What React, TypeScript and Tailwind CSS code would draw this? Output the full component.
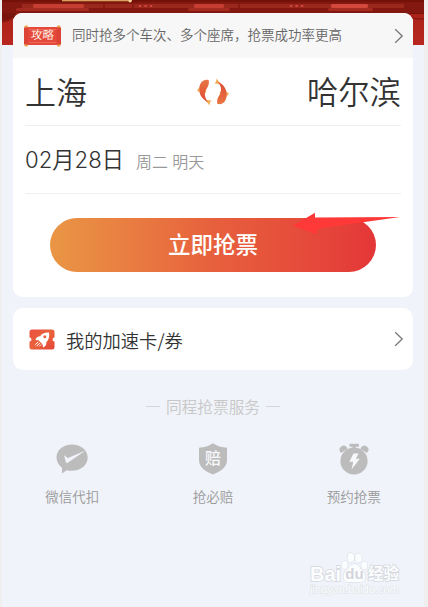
import React from 'react';

const FONT = "font-['Liberation_Sans','Noto_Sans_CJK_SC',sans-serif]";

const Banner: React.FC = () => (
  <svg viewBox="0 0 422 45" className="absolute left-0 top-0 h-[45px] w-full">
    <defs>
      <linearGradient id="wall" x1="0" y1="0" x2="0" y2="1">
        <stop offset="0" stopColor="#a32016" />
        <stop offset="1" stopColor="#b9271f" />
      </linearGradient>
    </defs>
    <rect width="422" height="45" fill="url(#wall)" />
    <rect width="422" height="13" fill="#82180f" />
    <rect y="0" width="422" height="2" fill="#741109" />
    <rect x="20" y="4" width="382" height="4" fill="#9b281c" />
    <rect x="60" y="0" width="70" height="1.3" fill="#d9a15c" />
    <circle cx="128" cy="0.8" r="1.6" fill="#f2d39a" />
    <rect x="31" y="4" width="51" height="4" rx="1.5" fill="#c63d31" />
    <rect x="14" y="8" width="73" height="3" rx="1.5" fill="#a62a1f" />
    <rect x="186" y="8" width="42" height="3" rx="1.5" fill="#a62a1f" />
    <rect x="192" y="4" width="30" height="4" rx="1.5" fill="#c63d31" />
    <rect x="326" y="8" width="45" height="3" rx="1.5" fill="#a62a1f" />
    <rect x="329" y="4" width="37" height="4" rx="1.5" fill="#d2483a" />
    <path d="M102 4v5M131 4v5M237 4v5" stroke="#741109" />
    {[137, 142.5, 148, 288, 293.5, 299].map((x) => (
      <rect key={x} x={x} y="5" width="2.2" height="2" fill="#d2483a" />
    ))}
    <path d="M0 13h14v3Q8 20 0 21zM396 13h26v1h-21v6h-5z" fill="#7a150d" />
    <path d="M0 22Q8 21 12 17M401 15Q405 19 422 19" stroke="#7a150d" fill="none" />
  </svg>
);

const StrategyTag: React.FC = () => (
  <div className="relative flex h-[22px] w-[37px] items-center justify-center">
    <svg viewBox="0 0 37 22" className="absolute inset-0 h-full w-full">
      <rect x="2" y="2" width="33" height="18" fill="#e5493b" />
      <path d="M4 4.5h29M4 17.5h29" stroke="#f0705c" strokeWidth="0.8" />
      <rect x="0.5" y="0.5" width="3.5" height="21" rx="1.2" fill="#efa04c" />
      <rect x="33" y="0.5" width="3.5" height="21" rx="1.2" fill="#efa04c" />
      <rect x="0" y="2.5" width="4.5" height="17" fill="#dc4236" />
      <rect x="32.5" y="2.5" width="4.5" height="17" fill="#dc4236" />
    </svg>
    <span className="relative -skew-x-6 pt-px text-[11.5px] leading-none text-[#fff3e6]">攻略</span>
  </div>
);

const Chevron: React.FC = () => (
  <svg viewBox="0 0 10 16" className="h-4 w-[10px]" fill="none" stroke="#777" strokeWidth="1.3">
    <path d="M1.2 1.2 8.2 8l-7 6.8" />
  </svg>
);

const Fish: React.FC = () => (
  <g>
    <path d="M2.6 9 0 12.300l2.800 2.500zM8 11l1.500 2.300-2 3zM8 21.500l6.800 1.300-1.700 1.200-.7 3.500-1.800-2.500z" fill="#f1ae55" />
    <path d="M11.800 2.200C6.500.6 2.500 4.800 2.300 10.800c-.1 5.800 2.500 10.300 8.700 13.400C8 20 7 16.300 8.600 12.500 10.800 9 12.400 6.500 11.800 2.200z" fill="url(#fish)" />
  </g>
);

const SwapFish: React.FC = () => (
  <svg viewBox="0 0 32 28" className="h-7 w-8">
    <defs>
      <linearGradient id="fish" x1="0" y1="0" x2="0" y2="28" gradientUnits="userSpaceOnUse">
        <stop offset="0" stopColor="#e87b45" />
        <stop offset="1" stopColor="#df4030" />
      </linearGradient>
    </defs>
    <Fish />
    <g transform="rotate(180 16 14)">
      <Fish />
    </g>
  </svg>
);

const CouponIcon: React.FC = () => (
  <svg viewBox="0 0 26 21" className="h-[21px] w-[26px]">
    <defs>
      <linearGradient id="coupon" x1="0" y1="0" x2="1" y2="1">
        <stop offset="0" stopColor="#ea5040" />
        <stop offset="0.5" stopColor="#e9623d" />
        <stop offset="1" stopColor="#e44637" />
      </linearGradient>
    </defs>
    <path d="M3 .5h20Q25.500.5 25.500 3v5.500a2 2 0 0 0 0 4V18q0 2.500-2.500 2.500H3Q.5 20.500.5 18v-5.500a2 2 0 0 0 0-4V3Q.5.5 3 .5z" fill="url(#coupon)" />
    <path d="M20 3.600c-4.500-.2-7 1-8.800 3.600-2.200-.1-3.800 1-4.900 3.700l3.300.4 4 4.200.4 3c2.700-1.200 3.700-3 3.300-5.200 2.300-2.200 3.400-5.200 2.700-9.700z" fill="#fff" />
    <circle cx="15.800" cy="7.800" r="1.500" fill="#e9623d" />
    <path d="M9.300 12.700l-3 3M10.800 14l-3.300 3.300M12 15.500l-1.700 1.800" stroke="#fff" strokeWidth="1" />
  </svg>
);

const ChatCheckIcon: React.FC = () => (
  <svg viewBox="0 0 32 32" className="h-8 w-8">
    <path d="M16 1.500C7.200 1.500.5 7 .5 14.500c0 4.200 2.200 7.800 5.600 10.200L6 30.500l4.700-3.300c1.700.4 3.500.6 5.300.6 8.800 0 15.700-5.600 15.700-13.200S24.800 1.500 16 1.500z" fill="#bcbcbc" />
    <path d="M8 12.200l4 2.700L29.500 7.500 11.800 19.700c-1 .6-1.700.2-2-.8z" fill="#f0f3f9" />
  </svg>
);

const ShieldIcon: React.FC = () => (
  <div className="relative flex h-8 w-8 justify-center">
    <svg viewBox="0 0 32 32" className="absolute inset-0 h-8 w-8">
      <path d="M16 .3c4 2.800 8.500 4.200 14 4.500v12.500c0 7-6.500 11.500-14 14.200C8.500 28.800 2 24.300 2 17.300V4.800C7.500 4.500 12 3.100 16 .3z" fill="#bcbcbc" />
    </svg>
    <span className="relative mt-2 text-[16px] font-medium leading-none text-[#f6f8fb]">赔</span>
  </div>
);

const TimerIcon: React.FC = () => (
  <svg viewBox="0 0 32 32" className="h-8 w-8" fill="#bcbcbc">
    <rect x="11.5" y=".7" width="9.500" height="3" rx=".8" />
    <rect x="14.5" y="3" width="3" height="4" />
    <path d="M2.300 9a4 4 0 0 1 6.600-4.600Q10 6 9 6.500 5.500 8 4 9.500 2.800 10 2.300 9zM29.700 9a4 4 0 0 0-6.600-4.600Q22 6 23 6.500q3.500 1.500 5 3 1.200.5 1.700-.5z" />
    <circle cx="16" cy="18" r="13.600" />
    <path d="M15.500 10.500h5l-2.700 5.300h4l-8.300 10.700 1.800-7.700h-4z" fill="#f6f8fb" />
  </svg>
);

const SERVICES = [
  { label: '微信代扣', icon: <ChatCheckIcon /> },
  { label: '抢必赔', icon: <ShieldIcon /> },
  { label: '预约抢票', icon: <TimerIcon /> },
];

const Watermark: React.FC = () => (
  <div className="absolute left-[310px] top-[552px] w-[92px] text-[#fcfdfe] [-webkit-text-stroke:1.5px_#d3d6dc] [paint-order:stroke]">
    <div className="flex h-[32px] items-end">
      <span className="w-[31px] text-[20px] font-bold leading-[20px]">Bai</span>
      <div className="relative flex h-8 w-[27px] items-end justify-center">
        <svg viewBox="0 0 27 32" className="absolute inset-0 h-8 w-[27px]" fill="#fcfdfe" stroke="#d3d6dc" strokeWidth=".9">
          <ellipse cx="3.6" cy="13" rx="3" ry="4" />
          <ellipse cx="9.8" cy="5.5" rx="3.300" ry="4.500" />
          <ellipse cx="17.5" cy="6" rx="3.300" ry="4.500" />
          <ellipse cx="23.3" cy="13.5" rx="3" ry="4" />
          <path d="M13.500 12c-4 0-5 4-8 6.500-5 4-3.500 11.500 2 11.500h12c5.500 0 7-7.500 2-11.500-3-2.500-4-6.500-8-6.500z" />
        </svg>
        <span className="relative pb-[3px] text-[15px] font-bold leading-[15px] text-[#d3d6dc] [-webkit-text-stroke:0]">du</span>
      </div>
      <span className="whitespace-nowrap pb-px text-[15.5px] font-bold leading-[18px]">经验</span>
    </div>
    <div className="whitespace-nowrap text-[11px] leading-[11px] [-webkit-text-stroke:1px_#dfe2e7]">jingyan.baidu.com</div>
  </div>
);

const App: React.FC = () => {
  return (
    <div className={`relative h-[607px] w-[428px] overflow-hidden bg-[#efeff0] pl-[2px] pr-1 text-[#333] ${FONT}`}>
      <main className="relative h-full bg-[#f0f3f9] px-[11px] pt-[13px]">
        <Banner />

        {/* Ticket search card */}
        <section className="relative h-[284px] overflow-hidden rounded-[9px] bg-white">
          <div className="flex h-[45px] items-center bg-[#f7f7f7] pl-[11px] pr-[9px]">
            <StrategyTag />
            <span className="ml-[11px] flex-1 whitespace-nowrap pt-px text-[13.5px] font-[350] leading-5 text-[#666]">
              同时抢多个车次、多个座席，抢票成功率更高
            </span>
            <Chevron />
          </div>

          <div className="mx-3 flex h-[68px] items-center justify-between border-b border-[#efefef]">
            <span className="w-[94px] pt-1 text-[31px] font-[350] leading-none">上海</span>
            <SwapFish />
            <span className="w-[94px] whitespace-nowrap pt-1 text-[31.3px] font-[350] leading-none">哈尔滨</span>
          </div>

          <div className="mx-3 flex h-[68px] items-center border-b border-[#efefef]">
            <span className="pt-[2px] font-['Inter','Noto_Sans_CJK_SC',sans-serif] text-[22.2px] font-[350] leading-none">
              02月28日
            </span>
            <span className="ml-3 mt-[6px] text-[16px] font-[350] leading-none text-[#999]">周二 明天</span>
          </div>

          <button className="ml-[37px] mt-[24px] flex h-[54px] w-[326px] items-center justify-center rounded-full bg-linear-to-r from-[#e99645] via-[#e7603d] via-50% to-[#e43638] pt-[2px] text-[22.5px] font-medium text-white">
            立即抢票
          </button>
        </section>

        {/* Coupons */}
        <section className="mt-[11px] flex h-[62px] items-center rounded-[10px] bg-white pl-4 pr-[9px]">
          <CouponIcon />
          <span className="ml-[11px] flex-1 pt-[2px] font-['Noto_Sans_CJK_SC',sans-serif] text-[18.3px] font-[350] leading-none">
            我的加速卡/券
          </span>
          <Chevron />
        </section>

        {/* Services */}
        <div className="mt-[26px] flex h-5 items-center justify-center gap-[6px] text-[#c8c8c8]">
          <span className="h-px w-[14px] bg-[#d4d5d8]" />
          <span className="pt-[3px] text-[15.7px] font-[350] leading-none">同程抢票服务</span>
          <span className="h-px w-[14px] bg-[#d4d5d8]" />
        </div>
        <div className="-mx-[11px] mt-[27px] grid grid-cols-3">
          {SERVICES.map((service) => (
            <div key={service.label} className="flex flex-col items-center">
              {service.icon}
              <span className="mt-[13px] text-[13.5px] font-[350] leading-5 text-[#999]">{service.label}</span>
            </div>
          ))}
        </div>
      </main>

      {/* Pointer drawn over the button */}
      <svg viewBox="0 0 108 24" className="absolute left-[293px] top-[212px] h-6 w-[108px]">
        <path d="M0 13.700 22 .8v4.700L107 5 24 16.800l-.5 5.700z" fill="#ff3838" />
      </svg>

      <Watermark />
    </div>
  );
};

export default App;
